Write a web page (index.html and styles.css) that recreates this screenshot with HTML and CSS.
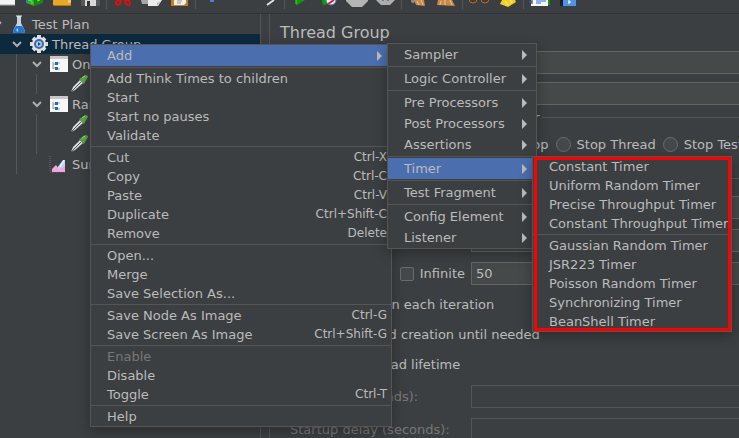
FILE: index.html
```html
<!DOCTYPE html>
<html lang="en">
<head>
<meta charset="utf-8">
<title>Thread Group</title>
<link rel="stylesheet" href="styles.css">
</head>
<body>
<header class="toolbar">
  <button class="tool" aria-label="New"><svg viewBox="0 0 28 8"><path d="M6 0h17v5H6z" fill="#f4f4f4"/><path d="M6 5h17" stroke="#aaa"/></svg></button>
  <button class="tool" aria-label="Templates"><svg viewBox="0 0 28 8"><path d="M6 0h8v6l-8-3z" fill="#2fae1e"/><path d="M14 0h9v3l-9 3z" fill="#1c8410"/><path d="M8 0l4 1v3M17 1l3-1" stroke="#6fe05a" fill="none"/><path d="M6 0v2l2 1V0z" fill="#2a7fd0"/></svg></button>
  <button class="tool" aria-label="Open"><svg viewBox="0 0 28 8"><path d="M5 0h17l1 5H5z" fill="#e8a62c"/><path d="M5 5h18v1H6z" fill="#b9770d"/><path d="M20 0h3v3h-3z" fill="#f6c95e"/></svg></button>
  <button class="tool" aria-label="Save"><svg viewBox="0 0 28 8"><path d="M5 0h19v5l-1 1H6L5 5z" fill="#55585a"/><path d="M9 0h11v6H9z" fill="#d8d8d8"/><path d="M11 1h3v5h-3z" fill="#333"/></svg></button>
  <span class="divider"></span>
  <button class="tool" aria-label="Cut"><svg viewBox="0 0 28 8"><path d="M12 0 8 1Q6 4 8 5q4 0 4-5M16 0l4 1q2 3 0 4-4 0-4-5" fill="none" stroke="#cf1414" stroke-width="2"/></svg></button>
  <button class="tool" aria-label="Copy"><svg viewBox="0 0 28 8"><path d="M4 0h11v4H5z" fill="#a5a7a8"/><path d="M11 0h14l-4 6H11z" fill="#ececec"/><path d="M20 6V3l4-2z" fill="#bbb"/></svg></button>
  <button class="tool" aria-label="Paste"><svg viewBox="0 0 28 8"><path d="M6 0h17v6H6z" fill="#c97e1e"/><path d="M9 0h12v3l-2 2H9z" fill="#f0f0f0"/><path d="M12 1h5M12 3h4" stroke="#999"/></svg></button>
  <span class="divider"></span>
  <button class="tool" aria-label="Expand All"><svg viewBox="0 0 28 8"><path d="M12 0h4v2h-4z" fill="#4d82d8"/></svg></button>
  <button class="tool" aria-label="Collapse All"><svg viewBox="0 0 28 8"></svg></button>
  <button class="tool" aria-label="Toggle"><svg viewBox="0 0 28 8"><path d="M13 5l7-5" stroke="#dedede" stroke-width="2"/></svg></button>
  <span class="divider"></span>
  <button class="tool" aria-label="Start"><svg viewBox="0 0 28 8"><path d="M9 0h9l-8 5H9z" fill="#0d9c0d"/><path d="M9 0v4" stroke="#4ddc3a"/></svg></button>
  <button class="tool" aria-label="Start no pauses"><svg viewBox="0 0 28 8"><path d="M7 0h6v4l-5 1z" fill="#0d9c0d"/><circle cx="16" cy="0" r="5" fill="#e8f0fa" stroke="#3c7cc8"/><path d="M13 4l6-4" stroke="#d22" stroke-width="2"/></svg></button>
  <button class="tool" aria-label="Stop"><svg viewBox="0 0 28 8"><path d="M3 0h22v1l-6 6H9L3 1z" fill="#b4b4b4"/></svg></button>
  <button class="tool" aria-label="Shutdown"><svg viewBox="0 0 28 8"><path d="M5 0h19l-5 5h-9z" fill="#aeaeae"/><path d="M11 0h2v1h-2zM16 0h2v1h-2z" fill="#777"/></svg></button>
  <span class="divider"></span>
  <button class="tool" aria-label="Clear"><svg viewBox="0 0 28 8"><path d="M10 0h10l1 6-9-1z" fill="#c68b4c"/><path d="M13 1l2 4M17 0l2 5" stroke="#f0c184"/><circle cx="9" cy="1" r="2" fill="#8b8e90"/></svg></button>
  <button class="tool" aria-label="Clear All"><svg viewBox="0 0 28 8"><path d="M6 0h14l3 6L5 5z" fill="#c68b4c"/><path d="M9 1l-1 4M13 0v5M18 0l2 5" stroke="#f0c184"/></svg></button>
  <span class="divider"></span>
  <button class="tool" aria-label="Search"><svg viewBox="0 0 28 8"><circle cx="8" cy="-1" r="4" fill="#55351d" stroke="#a36e42"/><circle cx="20" cy="-1" r="4" fill="#55351d" stroke="#a36e42"/></svg></button>
  <button class="tool" aria-label="Reset Search"><svg viewBox="0 0 28 8"><path d="M9 0h13l1 2-8 5-8-3z" fill="#efd02c"/><path d="M12 1l3 4M17 0l2 3" stroke="#fff08a"/></svg></button>
  <span class="divider"></span>
  <button class="tool" aria-label="Functions"><svg viewBox="0 0 28 8"><path d="M9 0h15v5L9 6z" fill="#149014"/><path d="M5 0h17v6H5z" fill="#f6f6f6"/><path d="M3 2h3M10 1h10M10 3h5" stroke="#2b6fd8"/><path d="M6 0v4" stroke="#222"/></svg></button>
  <button class="tool" aria-label="Help"><svg viewBox="0 0 28 8"><path d="M6 0h3v6H6z" fill="#1d1f20"/><path d="M9 0h13v6H9z" fill="#4f93e6"/><path d="M14 2h3M15 0v4" stroke="#fff"/></svg></button>
</header>

<main class="workspace">
  <aside class="tree">
    <div class="node root"><svg class="chevron" viewBox="0 0 12 12"><path d="M2 4l4 4 4-4"/></svg>
      <svg class="icon" viewBox="0 0 20 20"><path d="M8 2h4v7l4 8q0 2-2 2H6q-2 0-2-2l4-8z" fill="#c8d3dc"/><path d="M7 12h6l3 5q0 2-2 2H6q-2 0-2-2z" fill="#2476d6"/><path d="M7 16l2-2v4z" fill="#9fd2ff"/><path d="M7 2h6" stroke="#eee"/></svg>Test Plan</div>
    <div class="node depth-1 selected"><svg class="chevron" viewBox="0 0 12 12"><path d="M2 4l4 4 4-4"/></svg>
      <svg class="icon" viewBox="0 0 20 20"><path d="M10 1v18M1 10h18M4 4l12 12M16 4 4 16" stroke="#dcdcdc" stroke-width="4"/><circle cx="10" cy="10" r="7" fill="#e4e4e4"/><circle cx="10" cy="10" r="4" fill="#aecbef" stroke="#3c68a8" stroke-width="2"/><path d="M9 8l3 2-3 2z" fill="#23518e"/></svg>Thread Group</div>
    <div class="branch outer">
      <div class="node depth-2"><svg class="chevron" viewBox="0 0 12 12"><path d="M2 4l4 4 4-4"/></svg>
        <svg class="icon" viewBox="0 0 20 20"><path d="M1 2h18v16H1z" fill="#f8f8f8"/><path d="M1 2h18v3H1z" fill="#c8c8c8"/><path d="M4 8v7M4 10h3M4 14h3" stroke="#999" fill="none"/><path d="M6 8h3v3H6zM6 13h3v3H6z" fill="#2469bd"/><path d="M9 9h2M9 15h2" stroke="#7fb0e8"/></svg>Once Only Controller</div>
      <div class="branch inner">
        <div class="node depth-3"><svg class="icon" viewBox="0 0 20 20"><path d="M2 18l2-5 7-7 3 3-8 7z" fill="#d9dde0"/><path d="M2 18l10-10" stroke="#555"/><path d="M10 5l2-1 4-3q3 0 3 2l-3 5-1 2z" fill="#5da544"/><path d="M13 4l3-2" stroke="#a8dc8c"/></svg></div>
      </div>
      <div class="node depth-2"><svg class="chevron" viewBox="0 0 12 12"><path d="M2 4l4 4 4-4"/></svg>
        <svg class="icon" viewBox="0 0 20 20"><path d="M1 2h18v16H1z" fill="#f8f8f8"/><path d="M1 2h18v3H1z" fill="#c8c8c8"/><path d="M4 8v7M4 10h3M4 14h3" stroke="#999" fill="none"/><path d="M6 8h3v3H6zM6 13h3v3H6z" fill="#2469bd"/><path d="M9 9h2M9 15h2" stroke="#7fb0e8"/></svg>Random Controller</div>
      <div class="branch inner">
        <div class="node depth-3"><svg class="icon" viewBox="0 0 20 20"><path d="M2 18l2-5 7-7 3 3-8 7z" fill="#d9dde0"/><path d="M2 18l10-10" stroke="#555"/><path d="M10 5l2-1 4-3q3 0 3 2l-3 5-1 2z" fill="#5da544"/><path d="M13 4l3-2" stroke="#a8dc8c"/></svg></div>
        <div class="node depth-3"><svg class="icon" viewBox="0 0 20 20"><path d="M2 18l2-5 7-7 3 3-8 7z" fill="#d9dde0"/><path d="M2 18l10-10" stroke="#555"/><path d="M10 5l2-1 4-3q3 0 3 2l-3 5-1 2z" fill="#5da544"/><path d="M13 4l3-2" stroke="#a8dc8c"/></svg></div>
      </div>
      <div class="node depth-2 leaf"><svg class="icon" viewBox="0 0 20 20"><path d="M1 2v16h16" stroke="#696c6e" stroke-dasharray="1 1" fill="none"/><path d="M8 14l6-8h2v11H8z" fill="#b6d7fa"/><path d="M3 18v-3l4-4 3 4 6-3v6z" fill="#f3a5df"/><path d="M11 13l4-7" stroke="#fff"/></svg>Summary Report</div>
    </div>
  </aside>

  <form class="panel">
    <h1>Thread Group</h1>
    <div class="meta">
      <label for="name">Name:</label><input class="field" id="name" type="text">
      <label for="comments">Comments:</label><input class="field" id="comments" type="text">
    </div>
    <fieldset>
      <legend>Action to be taken after a Sampler error</legend>
      <div class="radios">
        <label><input type="radio" name="action">Continue</label>
        <label><input type="radio" name="action">Start Next Thread Loop</label>
        <label><input type="radio" name="action">Stop Thread</label>
        <label><input type="radio" name="action">Stop Test</label>
      </div>
    </fieldset>
    <fieldset class="properties">
      <legend>Thread Properties</legend>
      <div class="row"><label for="threads">Number of Threads (users):</label><input class="field" id="threads" type="text"></div>
      <div class="row"><label for="ramp">Ramp-up period (seconds):</label><input class="field" id="ramp" type="text"></div>
      <div class="row"><div class="loop"><label for="loops">Loop Count:</label><label class="tick"><input type="checkbox">Infinite</label></div><input class="field" id="loops" type="text" value="50"></div>
      <div class="option"><label class="tick"><input type="checkbox">Same user on each iteration</label></div>
      <div class="option"><label class="tick"><input type="checkbox">Delay Thread creation until needed</label></div>
      <div class="option"><label class="tick"><input type="checkbox">Specify Thread lifetime</label></div>
      <div class="row disabled"><label for="duration">Duration (seconds):</label><input class="field" id="duration" type="text" disabled></div>
      <div class="row disabled"><label for="delay">Startup delay (seconds):</label><input class="field" id="delay" type="text" disabled></div>
    </fieldset>
  </form>
</main>

<div class="menu context" role="menu">
  <button class="item parent active" role="menuitem">Add</button>
  <hr>
  <button class="item" role="menuitem">Add Think Times to children</button>
  <button class="item" role="menuitem">Start</button>
  <button class="item" role="menuitem">Start no pauses</button>
  <button class="item" role="menuitem">Validate</button>
  <hr>
  <button class="item" role="menuitem">Cut<kbd>Ctrl-X</kbd></button>
  <button class="item" role="menuitem">Copy<kbd>Ctrl-C</kbd></button>
  <button class="item" role="menuitem">Paste<kbd>Ctrl-V</kbd></button>
  <button class="item" role="menuitem">Duplicate<kbd>Ctrl+Shift-C</kbd></button>
  <button class="item" role="menuitem">Remove<kbd>Delete</kbd></button>
  <hr>
  <button class="item" role="menuitem">Open...</button>
  <button class="item" role="menuitem">Merge</button>
  <button class="item" role="menuitem">Save Selection As...</button>
  <hr>
  <button class="item" role="menuitem">Save Node As Image<kbd>Ctrl-G</kbd></button>
  <button class="item" role="menuitem">Save Screen As Image<kbd>Ctrl+Shift-G</kbd></button>
  <hr>
  <button class="item" role="menuitem" disabled>Enable</button>
  <button class="item" role="menuitem">Disable</button>
  <button class="item" role="menuitem">Toggle<kbd>Ctrl-T</kbd></button>
  <hr>
  <button class="item" role="menuitem">Help</button>
</div>

<div class="menu add" role="menu">
  <button class="item parent" role="menuitem">Sampler</button>
  <hr>
  <button class="item parent" role="menuitem">Logic Controller</button>
  <hr>
  <button class="item parent" role="menuitem">Pre Processors</button>
  <button class="item parent" role="menuitem">Post Processors</button>
  <button class="item parent" role="menuitem">Assertions</button>
  <hr>
  <button class="item parent active" role="menuitem">Timer</button>
  <hr>
  <button class="item parent" role="menuitem">Test Fragment</button>
  <hr>
  <button class="item parent" role="menuitem">Config Element</button>
  <button class="item parent" role="menuitem">Listener</button>
</div>

<div class="menu timers" role="menu">
  <button class="item" role="menuitem">Constant Timer</button>
  <button class="item" role="menuitem">Uniform Random Timer</button>
  <button class="item" role="menuitem">Precise Throughput Timer</button>
  <button class="item" role="menuitem">Constant Throughput Timer</button>
  <hr>
  <button class="item" role="menuitem">Gaussian Random Timer</button>
  <button class="item" role="menuitem">JSR223 Timer</button>
  <button class="item" role="menuitem">Poisson Random Timer</button>
  <button class="item" role="menuitem">Synchronizing Timer</button>
  <button class="item" role="menuitem">BeanShell Timer</button>
</div>
</body>
</html>
```

FILE: styles.css
```css
* { box-sizing: border-box; }

body {
  margin: 0;
  height: 100vh;
  overflow: hidden;
  display: flex;
  flex-direction: column;
  background: #3c3f41;
  color: #bbbbbb;
  font: 13px/15px "DejaVu Sans", sans-serif;
}

button, input { font: inherit; color: inherit; }

/* Toolbar */
.toolbar {
  display: flex;
  flex: none;
  height: 14px;
  padding-bottom: 4px;
  border-bottom: 1px solid #323232;
  margin-left: -8px;
}
.tool { flex: none; width: 28px; height: 8px; padding: 0; border: 0; background: none; }
.tool svg { display: block; width: 28px; height: 8px; overflow: hidden; }
.divider { flex: none; width: 1px; height: 9px; margin: 0 2px; background: #555555; }

.workspace { flex: 1; min-height: 0; display: flex; gap: 8px; }

/* Test tree */
.tree { flex: none; width: 261px; border-right: 1px solid #555555; overflow: hidden; }
.node { display: flex; align-items: center; height: 20px; white-space: nowrap; }
.node.selected { background: #0d293e; }
.icon { flex: none; width: 20px; height: 20px; margin-right: 3px; }
.chevron { flex: none; width: 12px; height: 12px; margin-right: 6px; fill: none; stroke: #adadad; stroke-width: 2; }
.root .chevron { margin-left: -9px; }
.depth-1 { padding-left: 11px; }
.depth-2 { padding-left: 31px; }
.depth-3 { padding-left: 69px; }
.leaf { padding-left: 49px; }
.branch { background: linear-gradient(#54585a, #54585a) 16px 0 / 1px 100% no-repeat; }
.branch.inner { background-position: 36px 0; }

/* Element editor */
.panel { flex: 1; min-width: 0; padding-left: 10px; border-left: 1px solid #555555; margin-right: -8px; overflow: hidden; }
h1 { margin: 0; font-size: 16px; font-weight: normal; line-height: 37px; }
.meta { display: grid; grid-template-columns: 90px 1fr; row-gap: 8px; align-items: center; margin-bottom: 5px; }
.field { width: 100%; min-width: 0; height: 23px; margin: 0; padding: 0 4px; border: 1px solid #646464; background: #45494a; }
fieldset { min-width: 0; margin: 0 0 19px; padding: 12px 0 0; border: 0 solid #555555; border-top-width: 1px; }
legend { padding: 0 2px 0 0; }
.radios { display: flex; gap: 7px; padding-left: 10px; white-space: nowrap; }
.radios label, .tick { display: flex; align-items: center; gap: 6px; }
input[type="radio"], input[type="checkbox"] {
  appearance: none;
  flex: none;
  width: 15px;
  height: 15px;
  margin: 0;
  border: 1px solid #6b6b6b;
  background: #43494a;
}
input[type="radio"] { border-radius: 50%; }
input[type="checkbox"] { width: 14px; height: 14px; border-radius: 2px; }
.properties { display: grid; row-gap: 10px; padding: 10px 0 0 10px; }
.row { display: grid; grid-template-columns: 181px 1fr; align-items: center; white-space: nowrap; }
.loop { display: flex; justify-content: space-between; padding-right: 6px; }
.option { height: 20px; }
.option .tick { height: 18px; }
.disabled { color: #777777; }
.disabled .field { border-color: #555555; background: #3c3f41; }

/* Popup menus */
.menu {
  position: absolute;
  border: 1px solid #555555;
  background: #3c3f41;
  box-shadow: 0 4px 12px rgba(0, 0, 0, 0.3);
}
.menu hr { height: 1px; margin: 1px 0; border: 0; background: #555555; }
.item {
  display: flex;
  align-items: center;
  justify-content: space-between;
  width: 100%;
  height: 19px;
  padding: 0 4px 0 16px;
  border: 0;
  background: none;
  text-align: left;
  white-space: nowrap;
}
.item kbd { font-family: inherit; font-size: 12px; }
.item:disabled { color: #777777; }
.parent { height: 21px; padding-right: 9px; }
.parent::after { content: ""; border: solid transparent; border-width: 5px 0 5px 5px; border-left-color: #bbbbbb; }
.active { background: #4b6eaf; }
.context { left: 90px; top: 44px; width: 302px; }
.add { left: 387px; top: 43px; width: 150px; }
.timers { left: 532px; top: 156px; width: 200px; }
.timers::after { content: ""; position: absolute; inset: 0 0 0 1px; border: 3px solid #ff0000; pointer-events: none; }
```
